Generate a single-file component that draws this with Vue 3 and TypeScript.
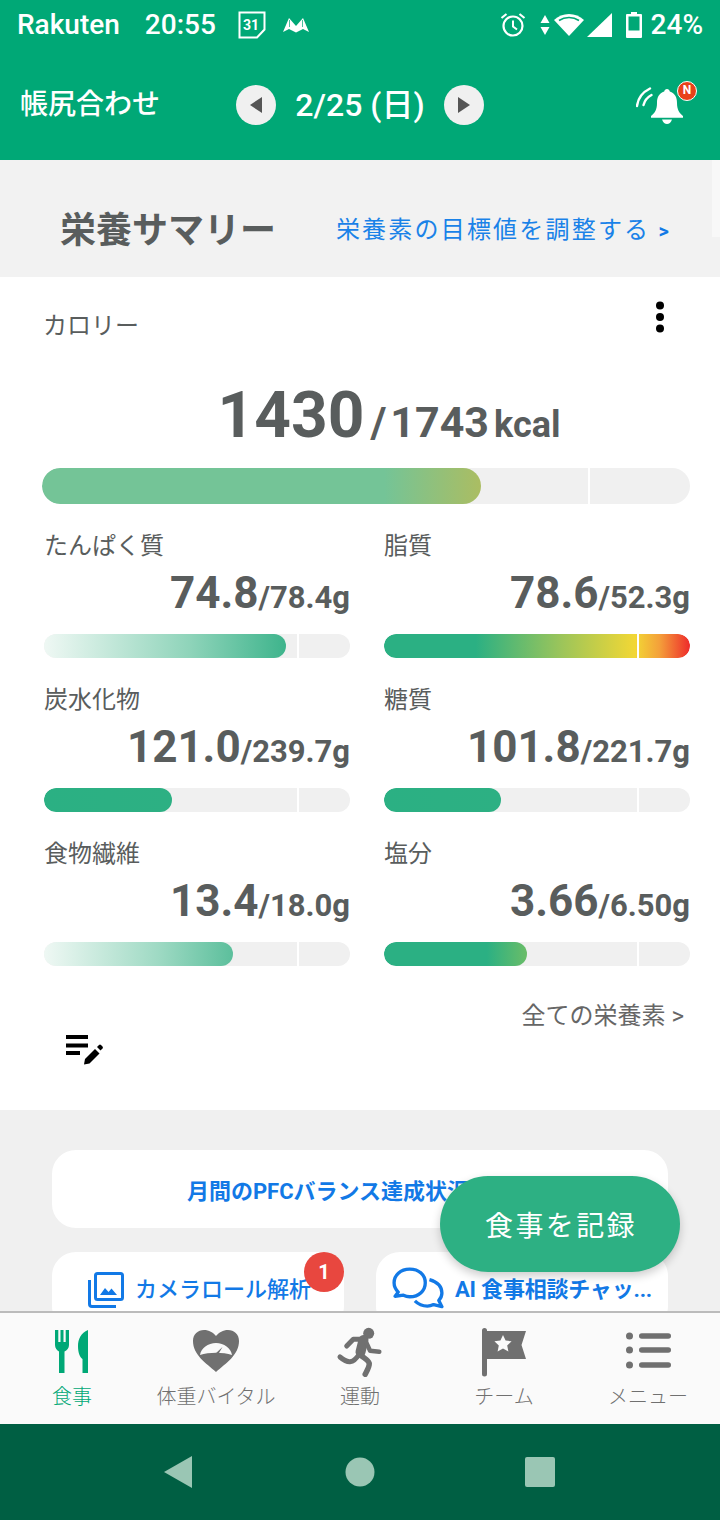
<script setup lang="ts">
interface Nutrient {
  name: string;
  value: string;
  goal: string;
  fill: number;
  bg: string;
}

const nutrients: Nutrient[] = [
  { name: "たんぱく質", value: "74.8", goal: "/78.4g", fill: 242, bg: "linear-gradient(90deg, #eff8f4, #8fd4ba 60%, #3eb48c)" },
  { name: "脂質", value: "78.6", goal: "/52.3g", fill: 306, bg: "linear-gradient(90deg, #2bb083 30%, #9cc55a 58%, #f2d735 82%, #f4a03a 90%, #ee2b2b 100%)" },
  { name: "炭水化物", value: "121.0", goal: "/239.7g", fill: 128, bg: "linear-gradient(90deg, #2bb083, #2db083)" },
  { name: "糖質", value: "101.8", goal: "/221.7g", fill: 117, bg: "linear-gradient(90deg, #2bb083, #2db083)" },
  { name: "食物繊維", value: "13.4", goal: "/18.0g", fill: 189, bg: "linear-gradient(90deg, #eff8f4, #9fdac4 60%, #5cbf9c)" },
  { name: "塩分", value: "3.66", goal: "/6.50g", fill: 143, bg: "linear-gradient(90deg, #2bb083 72%, #6abd68)" },
];

const tabs = [
  { label: "食事", icon: "meal", active: true },
  { label: "体重バイタル", icon: "vital", active: false },
  { label: "運動", icon: "run", active: false },
  { label: "チーム", icon: "team", active: false },
  { label: "メニュー", icon: "menu", active: false },
];
</script>

<template>
  <div class="phone">
    <header class="top">
      <div class="status">
        <span class="carrier">Rakuten</span>
        <span class="clock">20:55</span>
        <svg class="st-cal" width="28" height="28" viewBox="0 0 28 28">
          <path d="M1.500 1.500h25v17l-7.500 8H1.500z" fill="none" stroke="#fff" stroke-width="2" />
          <text x="13" y="18.500" font-size="14" font-weight="700" fill="#fff" text-anchor="middle" font-family="Roboto, sans-serif">31</text>
        </svg>
        <svg class="st-m" width="26" height="16" viewBox="0 0 26 16">
          <path d="M0 15L6 1l7 8 7-8 6 14-6-3-7 3.500L6 12z" fill="#fff" />
          <path d="M6.500 3v7M19.500 3v7" stroke="#00a876" stroke-width=".7" />
        </svg>
        <span class="grow"></span>
        <svg width="26" height="26" viewBox="0 0 26 26" fill="none" stroke="#fff">
          <circle cx="13" cy="14" r="9.500" stroke-width="2.200" />
          <path d="M13 8.500v6l4 3" stroke-width="2" />
          <path d="M1.500 6l5-4M24.500 6l-5-4" stroke-width="2.200" />
        </svg>
        <svg class="st-updown" width="10" height="22" viewBox="0 0 10 22"><path d="M5 1l4.500 8h-9zM5 21l4.500-8h-9z" fill="#fff" /></svg>
        <svg class="st-wifi" width="30" height="24" viewBox="0 0 30 24">
          <path d="M15 23L0 7C8-1 22-1 30 7z" fill="#fff" />
          <path d="M5 7.500C11 3.500 19 3.500 25 7.500" fill="none" stroke="#00a876" stroke-width="1.600" />
        </svg>
        <svg class="st-signal" width="25" height="24" viewBox="0 0 25 24"><path d="M0 24L25 0v24z" fill="#fff" /></svg>
        <svg class="st-batt" width="16" height="26" viewBox="0 0 16 26">
          <path d="M5 0h6v2h4a1 1 0 0 1 1 1v22a1 1 0 0 1-1 1H1a1 1 0 0 1-1-1V3a1 1 0 0 1 1-1h4z" fill="#fff" />
          <rect x="2.500" y="4.500" width="11" height="14" fill="#00a876" />
        </svg>
        <span class="pct">24%</span>
      </div>
      <div class="bar">
        <span class="mode">帳尻合わせ</span>
        <div class="dates">
          <button class="round">
            <svg width="12" height="16" viewBox="0 0 12 16"><path d="M12 0v16L0 8z" fill="#555" /></svg>
          </button>
          <span class="date">2/25 (日)</span>
          <button class="round">
            <svg width="12" height="16" viewBox="0 0 12 16"><path d="M0 0v16l12-8z" fill="#555" /></svg>
          </button>
        </div>
        <div class="bell">
          <svg width="52" height="40" viewBox="0 0 52 40">
            <path d="M1 20C2 12 7 6 14 2.500" fill="none" stroke="#fff" stroke-width="2.400" stroke-linecap="round" />
            <path d="M7.500 19C8.500 15 11 11.500 15.500 9" fill="none" stroke="#fff" stroke-width="2.400" stroke-linecap="round" />
            <path d="M31 3c1.500 0 2.500 1 2.800 2.500C39 7.500 41 11 41 17c0 6 2 10 6 13v1.700H15V30c4-3 6-7 6-13 0-6 2-9.500 7.200-11.500C28.500 4 29.500 3 31 3z" fill="#fff" />
            <path d="M26 33.500h10c-1 3-3 4.500-5 4.500s-4-1.500-5-4.500z" fill="#fff" />
          </svg>
          <span class="n-dot">N</span>
        </div>
      </div>
    </header>

    <main class="scroll">
      <div class="summary-head">
        <h1>栄養サマリー</h1>
        <a class="adjust">栄養素の目標値を調整する <b>&gt;</b></a>
        <i class="edge"></i>
      </div>

      <section class="card">
        <div class="cal-head">
          <span>カロリー</span>
          <svg width="10" height="32" viewBox="0 0 10 32" fill="#000">
            <circle cx="5" cy="4.500" r="4" /><circle cx="5" cy="16" r="4" /><circle cx="5" cy="27.500" r="4" />
          </svg>
        </div>
        <div class="cal-value">
          <span class="big">1430</span><span class="mid slash">/</span><span class="mid">1743</span><span class="unit">kcal</span>
        </div>
        <div class="track track-lg">
          <div class="fill cal-fill"></div>
          <i class="tick cal-tick"></i>
        </div>

        <div class="grid">
          <div v-for="n in nutrients" :key="n.name" class="item">
            <div class="name">{{ n.name }}</div>
            <div class="nums"><span class="val">{{ n.value }}</span><span class="goal">{{ n.goal }}</span></div>
            <div class="track">
              <div class="fill" :style="{ width: n.fill + 'px', background: n.bg }"></div>
              <i class="tick"></i>
            </div>
          </div>
        </div>

        <div class="all">全ての栄養素 &gt;</div>
        <svg class="note" width="38" height="32" viewBox="0 0 38 32">
          <path d="M0 1h22v4H0zM0 9.500h22v4H0zM0 17h14v4H0z" fill="#000" />
          <path d="M18 30.500l1-5.500 10-10 4.500 4.500-10 10z" fill="#000" />
          <path d="M31 13l2-2a1.500 1.500 0 0 1 2 0l1.500 1.500a1.500 1.500 0 0 1 0 2l-2 2z" fill="#000" />
        </svg>
      </section>

      <section class="links">
        <div class="pfc">月間のPFCバランス達成状況</div>
        <div class="link-row">
          <div class="link">
            <svg width="36" height="36" viewBox="0 0 36 36" fill="none" stroke="#1279e6">
              <rect x="7.500" y="1.500" width="27" height="26" rx="2" stroke-width="3" />
              <path d="M1.500 8v24a2.500 2.500 0 0 0 2.500 2.500h24" stroke-width="3" />
              <path d="M12 23l5-7 3.500 4 3-3.500 5.500 6.500z" fill="#1279e6" stroke="none" />
            </svg>
            <span>カメラロール解析</span>
            <i class="badge">1</i>
          </div>
          <div class="link link-ai">
            <svg width="52" height="46" viewBox="0 0 50 44" fill="none" stroke="#1279e6" stroke-width="3.200" stroke-linejoin="round">
              <path d="M17 2C8 2 2 8 2 15c0 4 2 7 4 9l-3 4 8-1c2 1 4 1.500 6 1.500 9 0 15-6 15-13.500S26 2 17 2z" />
              <path d="M36 12c7 2 12 6 12 13 0 3-1 5-3 7l3 6-8-2c-2 1-4 1.500-6 1.500-5 0-9-2-12-5" />
            </svg>
            <span>AI 食事相談チャッ...</span>
          </div>
        </div>
      </section>
    </main>

    <button class="fab">食事を記録</button>

    <nav class="tabs">
      <div v-for="t in tabs" :key="t.label" class="tab" :class="{ on: t.active }">
        <svg width="60" height="50" viewBox="0 0 60 50" fill="currentColor">
          <template v-if="t.icon === 'meal'">
            <path d="M13 3h3.300v12h2.200V3h3v12h2.200V3H27v15c0 3-2 5.500-4.500 6.500V46H17V24.500C15 23.500 13 21 13 18z" />
            <path d="M46 3v43h-5.500V32C38 30.500 36 26 36 19c0-7 3-13 10-16z" />
          </template>
          <template v-else-if="t.icon === 'vital'">
            <path d="M30 45C20 36 7 28 7 14 7 7 12 3 18 3c5 0 9 2.500 12 6 3-3.500 7-6 12-6 6 0 11 4 11 11 0 14-13 22-23 31z" />
            <path d="M14 28c1-7 8-12 16-12s15 5 16 12c-9-3-23-3-32 0z" fill="#fafafa" />
            <path d="M28.500 27.500l8-7.500-5 8.500z" />
          </template>
          <template v-else-if="t.icon === 'run'">
            <circle cx="38.700" cy="6.300" r="5.500" />
            <g fill="none" stroke="currentColor" stroke-linecap="round" stroke-linejoin="round">
              <path d="M16.700 19l6.600-6.700h8.400" stroke-width="5" />
              <path d="M33.500 13L30.500 25" stroke-width="10" />
              <path d="M36.700 16.300L40 23.700l9.300 1" stroke-width="4.500" />
              <path d="M30 26c-3 5-6 8.500-10 8.700-3.500 .2-6.500-1.700-10-4.700" stroke-width="5" />
              <path d="M30.700 28c3 3 7.500 5 8.500 8.300 .5 3-2 7-4 11" stroke-width="5.500" />
            </g>
          </template>
          <template v-else-if="t.icon === 'team'">
            <path d="M10.500 1A2.500 2.500 0 0 1 13 3.500V4h39l-4.500 14L52 32H13v15a2.500 2.500 0 0 1-5 0V3.500A2.500 2.500 0 0 1 10.500 1z" />
            <path d="M29 8l2.600 5.600 6 .7-4.400 4.100 1.200 6-5.400-3-5.400 3 1.200-6-4.400-4.100 6-.7z" fill="#fafafa" />
          </template>
          <template v-else>
            <circle cx="11.500" cy="9" r="3.500" /><circle cx="11.500" cy="23" r="3.500" /><circle cx="11.500" cy="38" r="3.500" />
            <rect x="21" y="6.200" width="32" height="5.600" rx="2.800" /><rect x="21" y="20.200" width="32" height="5.600" rx="2.800" /><rect x="21" y="35.200" width="32" height="5.600" rx="2.800" />
          </template>
        </svg>
        <span>{{ t.label }}</span>
      </div>
    </nav>

    <footer class="sys">
      <svg width="32" height="34" viewBox="0 0 32 34"><path d="M30 1v32L2 17z" fill="#9ac6b4" /></svg>
      <svg width="30" height="30" viewBox="0 0 30 30"><circle cx="15" cy="15" r="14.500" fill="#9ac6b4" /></svg>
      <svg width="30" height="30" viewBox="0 0 30 30"><rect width="30" height="30" rx="2" fill="#9ac6b4" /></svg>
    </footer>
  </div>
</template>

<style>
html, body { margin: 0; padding: 0; background: #fff; }
</style>

<style scoped>
* { box-sizing: border-box; }
.phone {
  position: relative;
  width: 720px;
  height: 1520px;
  overflow: hidden;
  display: flex;
  flex-direction: column;
  background: #f0f0f0;
  font-family: Roboto, "Noto Sans CJK JP", sans-serif;
  color: #595d5d;
}
.top {
  height: 160px;
  background: #00a876;
  color: #fff;
  flex: none;
}
.status {
  height: 52px;
  padding: 0 17px 3px;
  display: flex;
  align-items: center;
  font-size: 28px;
  font-weight: 500;
}
.clock { margin-left: 25px; }
.st-cal { margin-left: 22px; }
.st-m { margin-left: 17px; }
.grow { flex: 1; }
.st-updown { margin-left: 14px; }
.st-wifi { margin-left: 4px; }
.st-signal { margin-left: 3px; }
.st-batt { margin-left: 14px; }
.pct { margin-left: 9px; }
.bar {
  height: 108px;
  padding: 0 22px 2px;
  display: grid;
  grid-template-columns: 1fr 248px 1fr;
  align-items: center;
}
.mode { font-size: 28px; font-weight: 500; line-height: 1; margin-left: -2px; }
.dates {
  display: flex;
  align-items: center;
  justify-content: space-between;
}
.round {
  width: 40px;
  height: 40px;
  border: 0;
  padding: 0;
  border-radius: 50%;
  background: #f0f0f0;
  display: flex;
  align-items: center;
  justify-content: center;
}
.date { font-size: 32px; font-weight: 500; line-height: 40px; }
.bell {
  position: relative;
  display: flex;
  justify-self: end;
  margin-right: 10px;
  margin-top: 2px;
}
.n-dot {
  position: absolute;
  top: -5px;
  right: -9px;
  width: 20px;
  height: 20px;
  border-radius: 50%;
  background: #e8421a;
  border: 1.500px solid #fff;
  font-size: 12px;
  font-weight: 700;
  line-height: 17px;
  text-align: center;
}
.scroll {
  flex: 1;
  min-height: 0;
  overflow: hidden;
}
.summary-head {
  position: relative;
  height: 117px;
  padding: 17px 49px 0 60px;
  display: flex;
  align-items: center;
  justify-content: space-between;
  background: #f2f2f2;
}
.edge {
  position: absolute;
  top: 0;
  right: 0;
  width: 8px;
  height: 77px;
  background: #f8f8f8;
}
h1 {
  margin: 0;
  font-size: 36px;
  font-weight: 700;
  color: #595d5d;
}
.adjust {
  font-size: 24px;
  letter-spacing: 2.200px;
  color: #1a82e8;
}
.adjust b { font-size: 20px; color: #1279e6; }
.card {
  height: 833px;
  background: #fff;
  padding: 24px 30px 0 44px;
  position: relative;
}
.cal-head {
  display: flex;
  justify-content: space-between;
  align-items: flex-start;
  padding-right: 25px;
  font-size: 24px;
  line-height: 48px;
  margin-left: -1px;
}
.cal-head span { margin-top: 1px; }
.cal-value {
  display: flex;
  justify-content: center;
  align-items: baseline;
  margin-top: 20px;
  height: 92px;
  line-height: 92px;
  font-weight: 700;
  padding-left: 44px;
}
.big { font-size: 64px; }
.mid { font-size: 43px; }
.slash { margin: 0 4px 0 6px; }
.unit { font-size: 36px; margin-left: 5px; }
.track {
  position: relative;
  height: 24px;
  width: 306px;
  border-radius: 12px;
  background: #f0f0f0;
  overflow: hidden;
}
.track-lg {
  width: 648px;
  height: 36px;
  border-radius: 18px;
  margin-left: -2px;
  margin-top: 6px;
}
.fill { height: 100%; border-radius: 12px; }
.cal-fill {
  width: 439px;
  border-radius: 18px;
  background: linear-gradient(90deg, #74c497 78%, #abbd62);
}
.tick {
  position: absolute;
  top: 0;
  bottom: 0;
  left: 253px;
  width: 2px;
  background: #fff;
}
.cal-tick { left: 546px; }
.grid {
  display: grid;
  grid-template-columns: 306px 306px;
  column-gap: 34px;
  margin-top: 25px;
}
.item { height: 154px; }
.name { font-size: 24px; line-height: 34px; }
.nums {
  text-align: right;
  font-weight: 700;
  height: 62px;
  line-height: 62px;
  margin-top: -1px;
  margin-bottom: 10px;
}
.val { font-size: 44px; }
.goal { font-size: 31px; }
.all {
  text-align: right;
  font-size: 24px;
  line-height: 34px;
  margin-top: 8px;
  padding-right: 6px;
  color: #666;
}
.note {
  display: block;
  margin: 1px 0 0 22px;
}
.links { padding: 40px 52px 0; }
.pfc {
  height: 78px;
  border-radius: 24px;
  background: #fff;
  display: flex;
  align-items: center;
  justify-content: center;
  padding-right: 64px;
  font-size: 22px;
  font-weight: 700;
  color: #1279e6;
}
.link-row {
  display: flex;
  gap: 32px;
  margin-top: 24px;
}
.link {
  position: relative;
  flex: none;
  width: 292px;
  height: 78px;
  border-radius: 24px;
  background: #fff;
  display: flex;
  align-items: flex-start;
  padding: 20px 0 0 36px;
  font-size: 22px;
  font-weight: 500;
  color: #1279e6;
  gap: 11px;
  white-space: nowrap;
}
.link span { line-height: 36px; }
.link-ai {
  padding-left: 16px;
  padding-top: 15px;
  gap: 11px;
  font-weight: 700;
  letter-spacing: -0.200px;
}
.link-ai span { margin-top: 5px; }
.badge {
  position: absolute;
  top: 0;
  right: 0;
  width: 40px;
  height: 40px;
  border-radius: 50%;
  background: #e8473f;
  color: #fff;
  font-style: normal;
  font-size: 20px;
  font-weight: 700;
  line-height: 40px;
  text-align: center;
}
.fab {
  position: absolute;
  left: 440px;
  top: 1176px;
  width: 240px;
  height: 96px;
  border: 0;
  padding: 0 0 0 2px;
  border-radius: 48px;
  background: #2db083;
  color: #fff;
  font-family: inherit;
  font-size: 28px;
  font-weight: 400;
  letter-spacing: 2.400px;
  box-shadow: 0 4px 10px rgba(0, 0, 0, 0.2);
}
.tabs {
  flex: none;
  height: 113px;
  border-top: 2px solid #bbb;
  background: #fafafa;
  display: flex;
  color: #707070;
}
.tab {
  width: 144px;
  display: flex;
  flex-direction: column;
  align-items: center;
  padding-top: 14px;
  font-size: 20px;
  font-weight: 300;
  line-height: 28px;
}
.tab svg { display: block; margin-bottom: 6px; }
.tab.on { color: #00a876; }
.sys {
  flex: none;
  height: 96px;
  background: #005f43;
  display: flex;
  align-items: center;
  justify-content: space-between;
  padding: 0 165px 0 162px;
}
</style>
